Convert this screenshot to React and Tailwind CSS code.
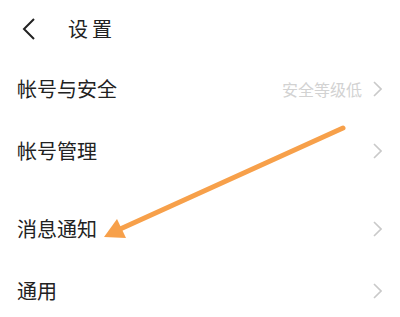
import React from 'react';

const Chevron = () => (
  <svg width="10" height="16" viewBox="0 0 10 16" className="shrink-0">
    <polyline points="2,1 9,8 2,15" fill="none" stroke="#c9c9c9" strokeWidth="1.6" />
  </svg>
);

const Row = ({ label, extra }) => (
  <div className="flex h-[62px] items-center justify-between pl-[17px] pr-[18px]">
    <span className="text-[20px] text-[#222]">{label}</span>
    <div className="flex items-center gap-[10px]">
      {extra && <span className="text-[16px] text-[#d2d2d2]">{extra}</span>}
      <Chevron />
    </div>
  </div>
);

export default function App() {
  return (
    <div
      className="relative h-[317px] w-[400px] overflow-hidden bg-white"
      style={{ fontFamily: '"Noto Sans CJK SC", "Noto Sans", sans-serif' }}
    >
      {/* 顶部标题栏 */}
      <div className="flex h-[58px] items-center pl-[22px]">
        <svg width="14" height="22" viewBox="0 0 14 22">
          <polyline points="12,1 2,11 12,21" fill="none" stroke="#222" strokeWidth="2" />
        </svg>
        <span className="ml-[32px] text-[20px] tracking-[4px] text-[#222]">设置</span>
      </div>

      <Row label="帐号与安全" extra="安全等级低" />
      <Row label="帐号管理" />
      <div className="h-[16px]" />
      <Row label="消息通知" />
      <Row label="通用" />

      {/* 橙色箭头标注 */}
      <svg className="pointer-events-none absolute left-0 top-0" width="400" height="317">
        <line x1="343" y1="128" x2="118" y2="230" stroke="#f7a04a" strokeWidth="5" strokeLinecap="round" />
        <polygon points="104,237 117,219 126,238" fill="#f7a04a" />
      </svg>
    </div>
  );
}
